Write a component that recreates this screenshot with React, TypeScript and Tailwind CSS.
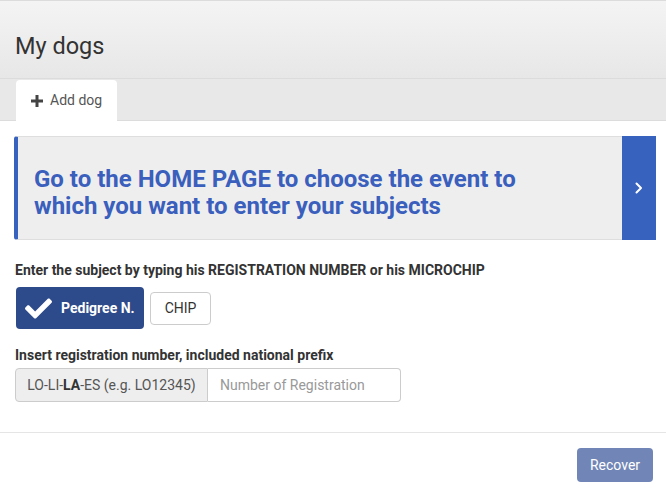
import { useState } from "react";

const FONT = "font-['Roboto','Liberation_Sans',sans-serif]";

export default function App() {
  const [mode, setMode] = useState<"pedigree" | "chip">("pedigree");

  return (
    <div className={`min-h-[495px] w-full bg-white text-[#333] ${FONT}`}>
      <header className="h-[79px] border-y border-[#dcdcdc] bg-gradient-to-b from-[#f4f4f4] to-[#e7e7e7] pl-[15px] pt-[31px]">
        <h1 className="text-[23.5px] leading-[28px] text-[#333]">My dogs</h1>
      </header>

      <nav className="flex h-[42px] items-end border-b border-[#dcdcdc] bg-[#e8e8e8] pl-[16px]">
        <button className="-mb-px flex h-[41px] w-[101px] items-center gap-[7px] rounded-t-[4px] bg-white pl-[15px] text-[14px] text-[#555]">
          <PlusIcon />
          Add dog
        </button>
      </nav>

      <section className="px-[14px] pt-[15px] pr-[10px]">
        <div className="flex h-[104px] rounded-l-[3px] border-y border-l-4 border-y-[#dedede] border-l-[#3762bd] bg-[#eeeeee]">
          <p className="w-[540px] pl-[16px] pt-[29px] text-[24px] font-bold leading-[27px] text-[#3a5fbd]">
            Go to the HOME PAGE to choose the event to which you want to
            enter your subjects
          </p>
          <div className="ml-auto -my-px flex w-[34px] items-center justify-center bg-[#3762bd]">
            <ChevronIcon />
          </div>
        </div>
      </section>

      <section className="px-[15px] pt-[21px]">
        <p className="text-[14px] font-bold leading-[18px] text-[#333]">
          Enter the subject by typing his REGISTRATION NUMBER or his MICROCHIP
        </p>

        <div className="mt-[8px] flex items-center gap-[6px] pl-px">
          <button
            onClick={() => setMode("pedigree")}
            className={`flex h-[42px] w-[128px] items-center gap-[9px] rounded-[4px] pl-[9px] text-[14px] font-bold ${
              mode === "pedigree"
                ? "bg-[#2d4a8a] text-white"
                : "border border-[#ccc] bg-white text-[#333]"
            }`}
          >
            <CheckIcon />
            Pedigree N.
          </button>
          <button
            onClick={() => setMode("chip")}
            className="h-[33px] w-[61px] rounded-[4px] border border-[#cccccc] bg-white text-[14px] text-[#333]"
          >
            CHIP
          </button>
        </div>

        <p className="mt-[17px] text-[14px] font-bold leading-[18px] text-[#333]">
          Insert registration number, included national prefix
        </p>

        <div className="mt-[4px] flex h-[34px] w-[386px]">
          <span className="flex w-[193px] items-center justify-center rounded-l-[4px] border border-[#cccccc] bg-[#eeeeee] text-[14px] text-[#555]">
            LO-LI-<b className="font-bold text-[#333]">LA</b>-ES (e.g. LO12345)
          </span>
          <input
            placeholder="Number of Registration"
            className="w-[193px] rounded-r-[4px] border border-l-0 border-[#cccccc] bg-white px-[12px] text-[14px] text-[#555] outline-none placeholder:text-[#999]"
          />
        </div>
      </section>

      <hr className="mt-[30px] border-t border-[#e5e5e5]" />

      <div className="flex justify-end pr-[13px] pt-[15px]">
        <button className="h-[34px] w-[76px] rounded-[4px] bg-[#7186b6] text-[14px] text-white">
          Recover
        </button>
      </div>
    </div>
  );
}

function PlusIcon() {
  return (
    <svg width="12" height="12" viewBox="0 0 12 12" className="text-[#444]">
      <path d="M4.5 0h3v4.5H12v3H7.5V12h-3V7.5H0v-3h4.5z" fill="currentColor" />
    </svg>
  );
}

function ChevronIcon() {
  return (
    <svg width="8" height="12" viewBox="0 0 8 12">
      <path
        d="M1.5 1.5 6 6l-4.5 4.5"
        fill="none"
        stroke="white"
        strokeWidth="2"
        strokeLinecap="round"
        strokeLinejoin="round"
      />
    </svg>
  );
}

function CheckIcon() {
  return (
    <svg width="27" height="21" viewBox="0 64 512 384">
      <path
        fill="white"
        d="M173.898 439.404l-166.4-166.4c-9.997-9.997-9.997-26.206 0-36.204l36.203-36.204c9.997-9.998 26.207-9.998 36.204 0L192 312.69 432.095 72.596c9.997-9.997 26.207-9.997 36.204 0l36.203 36.204c9.997 9.997 9.997 26.206 0 36.204l-294.4 294.401c-9.998 9.997-26.207 9.997-36.204-.001z"
      />
    </svg>
  );
}
